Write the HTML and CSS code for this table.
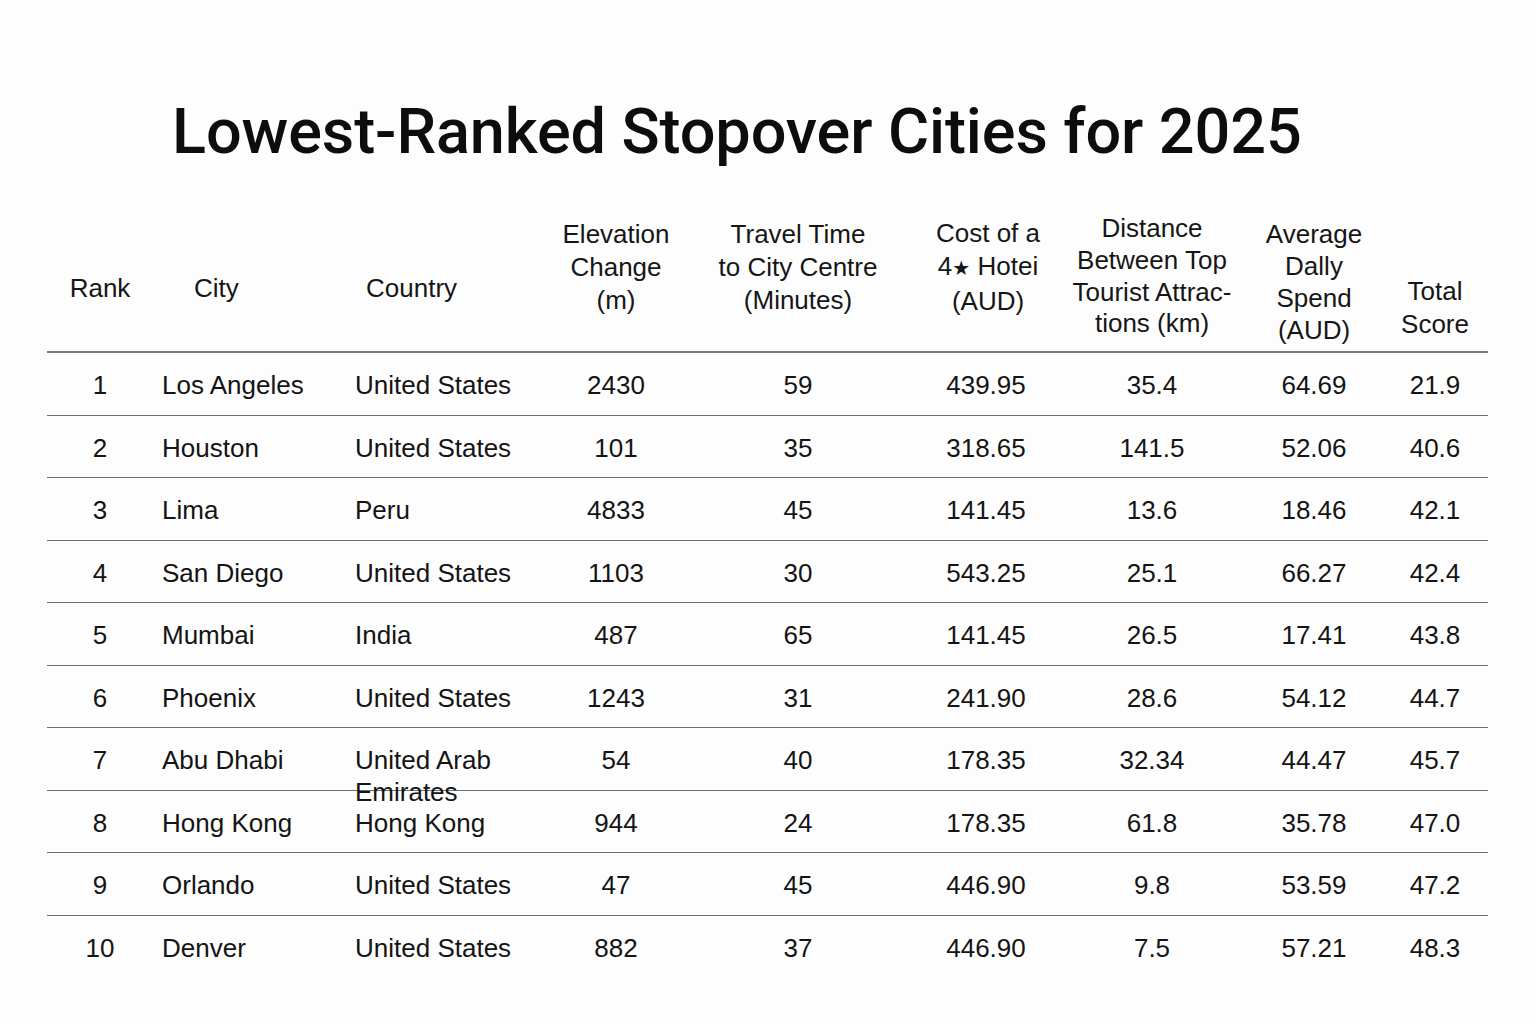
FILE: index.html
```html
<!DOCTYPE html>
<html lang="en">
<head>
<meta charset="utf-8">
<title>Lowest-Ranked Stopover Cities for 2025</title>
<link rel="stylesheet" href="styles.css">
</head>
<body>
<main class="page">
  <h1 class="title">Lowest-Ranked Stopover Cities for 2025</h1>
  <div class="table">
    <div class="head">
      <div class="hc h-rank"><span>Rank</span></div>
      <div class="hc h-city"><span>City</span></div>
      <div class="hc h-country"><span>Country</span></div>
      <div class="hc h-three"><span>Elevation<br>Change<br>(m)</span></div>
      <div class="hc h-three"><span>Travel Time<br>to City Centre<br>(Minutes)</span></div>
      <div class="hc h-three h-cost"><span>Cost of a<br>4<span class="star">★</span> Hotei<br>(AUD)</span></div>
      <div class="hc h-dist"><span>Distance<br>Between Top<br>Tourist Attrac-<br>tions (km)</span></div>
      <div class="hc h-avg"><span>Average<br>Dally<br>Spend<br>(AUD)</span></div>
      <div class="hc h-total"><span>Total<br>Score</span></div>
    </div>
    <div class="row"><div class="c num">1</div><div class="c txt">Los Angeles</div><div class="c txt2">United States</div><div class="c num">2430</div><div class="c num">59</div><div class="c num">439.95</div><div class="c num">35.4</div><div class="c num">64.69</div><div class="c num tot">21.9</div></div>
    <div class="row"><div class="c num">2</div><div class="c txt">Houston</div><div class="c txt2">United States</div><div class="c num">101</div><div class="c num">35</div><div class="c num">318.65</div><div class="c num">141.5</div><div class="c num">52.06</div><div class="c num tot">40.6</div></div>
    <div class="row"><div class="c num">3</div><div class="c txt">Lima</div><div class="c txt2">Peru</div><div class="c num">4833</div><div class="c num">45</div><div class="c num">141.45</div><div class="c num">13.6</div><div class="c num">18.46</div><div class="c num tot">42.1</div></div>
    <div class="row"><div class="c num">4</div><div class="c txt">San Diego</div><div class="c txt2">United States</div><div class="c num">1103</div><div class="c num">30</div><div class="c num">543.25</div><div class="c num">25.1</div><div class="c num">66.27</div><div class="c num tot">42.4</div></div>
    <div class="row"><div class="c num">5</div><div class="c txt">Mumbai</div><div class="c txt2">India</div><div class="c num">487</div><div class="c num">65</div><div class="c num">141.45</div><div class="c num">26.5</div><div class="c num">17.41</div><div class="c num tot">43.8</div></div>
    <div class="row"><div class="c num">6</div><div class="c txt">Phoenix</div><div class="c txt2">United States</div><div class="c num">1243</div><div class="c num">31</div><div class="c num">241.90</div><div class="c num">28.6</div><div class="c num">54.12</div><div class="c num tot">44.7</div></div>
    <div class="row"><div class="c num">7</div><div class="c txt">Abu Dhabi</div><div class="c txt2">United Arab Emirates</div><div class="c num">54</div><div class="c num">40</div><div class="c num">178.35</div><div class="c num">32.34</div><div class="c num">44.47</div><div class="c num tot">45.7</div></div>
    <div class="row"><div class="c num">8</div><div class="c txt">Hong Kong</div><div class="c txt2">Hong Kong</div><div class="c num">944</div><div class="c num">24</div><div class="c num">178.35</div><div class="c num">61.8</div><div class="c num">35.78</div><div class="c num tot">47.0</div></div>
    <div class="row"><div class="c num">9</div><div class="c txt">Orlando</div><div class="c txt2">United States</div><div class="c num">47</div><div class="c num">45</div><div class="c num">446.90</div><div class="c num">9.8</div><div class="c num">53.59</div><div class="c num tot">47.2</div></div>
    <div class="row last"><div class="c num">10</div><div class="c txt">Denver</div><div class="c txt2">United States</div><div class="c num">882</div><div class="c num">37</div><div class="c num">446.90</div><div class="c num">7.5</div><div class="c num">57.21</div><div class="c num tot">48.3</div></div>
  </div>
</main>
</body>
</html>
```
FILE: styles.css
```css
* { box-sizing: border-box; }
html, body { margin: 0; padding: 0; background: #fdfdfd; }
body {
  width: 1536px;
  height: 1024px;
  overflow: hidden;
  color: #141414;
  font-family: "Liberation Sans", Arial, sans-serif;
}
.page { padding-top: 96px; }
.title {
  margin: 0;
  padding-left: 172px;
  font-family: Roboto, "Liberation Sans", sans-serif;
  font-weight: 500;
  font-size: 63px;
  line-height: 72px;
  letter-spacing: -0.1px;
  color: #0d0d0d;
}
.table {
  margin-top: 32px;
  margin-left: 47px;
  width: 1441px;
}
.head, .row {
  display: grid;
  grid-template-columns: 106px 192px 185px 172px 192px 184px 148px 176px 86px;
}
.head {
  height: 153px;
  border-bottom: 2px solid #7a7a7a;
}
.hc {
  display: flex;
  align-items: center;
  justify-content: center;
  text-align: center;
  font-size: 26px;
  line-height: 33px;
  white-space: nowrap;
  color: #161616;
}
.h-rank { padding-top: 26px; }
.h-city { justify-content: flex-start; padding-left: 41px; padding-top: 26px; }
.h-country { justify-content: flex-start; padding-left: 21px; padding-top: 26px; }
.h-three { padding-bottom: 17px; }
.h-cost { padding-left: 4px; }
.h-dist { line-height: 31.8px; padding-top: 2px; }
.h-avg { line-height: 32px; padding-top: 13px; }
.h-total { padding-top: 64px; padding-right: 20px; }
.star { font-family: "DejaVu Sans", sans-serif; font-size: 20px; }
.row {
  height: 62.5px;
  border-bottom: 1px solid #6e6e6e;
}
.row.last { border-bottom: none; }
.c {
  font-size: 26px;
  line-height: 32px;
  padding-top: 16px;
  white-space: nowrap;
}
.num { text-align: center; }
.txt { padding-left: 9px; }
.txt2 { padding-left: 10px; white-space: normal; padding-right: 8px; }
.tot { padding-right: 20px; }
```
